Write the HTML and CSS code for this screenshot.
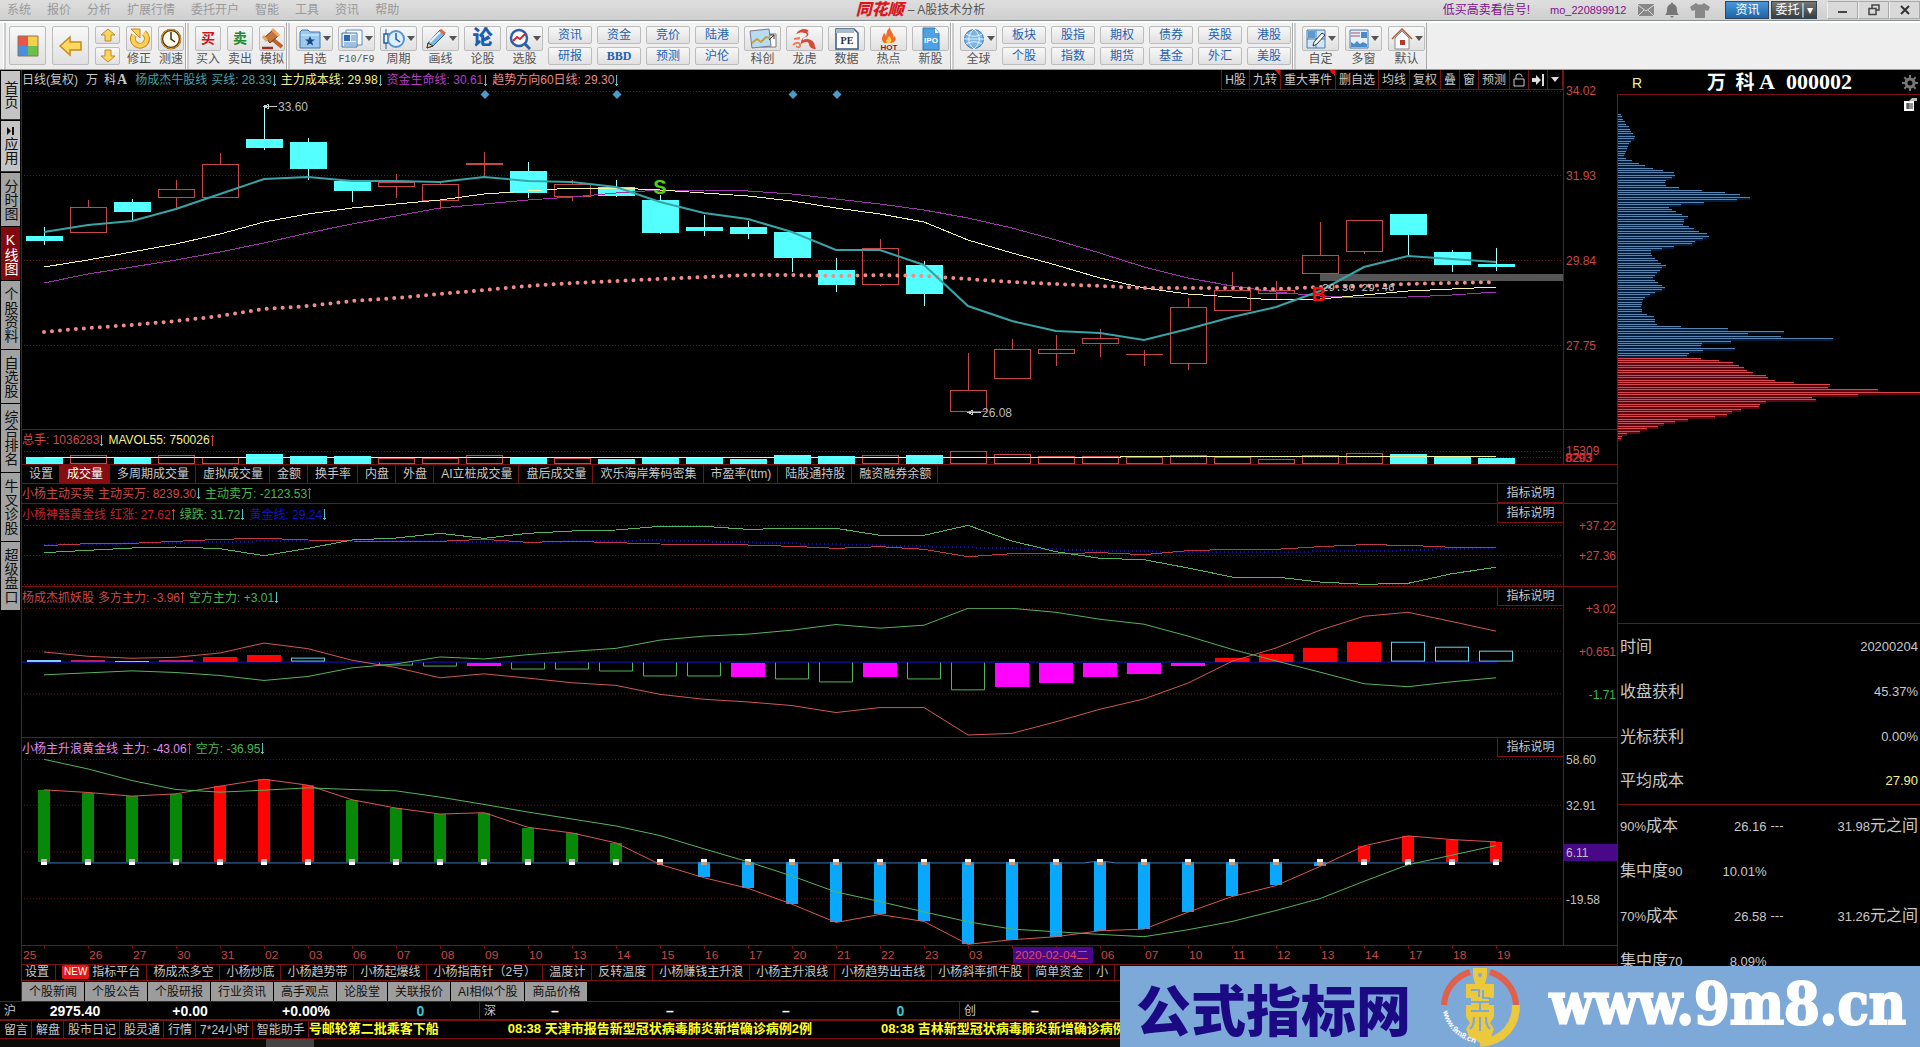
FILE: index.html
```html
<!DOCTYPE html>
<html lang="zh-CN">
<head>
<meta charset="utf-8">
<title>同花顺 - A股技术分析</title>
<link rel="stylesheet" href="styles.css">
</head>
<body>
<header class="titlebar">
  <nav class="menu">
    <a href="#">系统</a><a href="#">报价</a><a href="#">分析</a><a href="#">扩展行情</a><a href="#">委托开户</a><a href="#">智能</a><a href="#">工具</a><a href="#">资讯</a><a href="#">帮助</a>
  </nav>
  <div class="app-title"><span class="brand">同花顺</span><span>– A股技术分析</span></div>
  <div class="account">
    <a class="promo" href="#">低买高卖看信号!</a>
    <a class="promo user" href="#">mo_220899912</a>
    <svg width="16" height="12" viewBox="0 0 16 12"><rect width="16" height="12" fill="#888"/><path d="M0 1l8 6 8-6M0 12l6-6M16 12l-6-6" stroke="#ddd" fill="none"/></svg>
    <svg width="16" height="16" viewBox="0 0 16 16"><path d="M8 0l1.300 2C12 3 13 5 13 8c0 3 1 4 2 5H1c1-1 2-2 2-5 0-3 1-5 3.700-6zM6 14h4l-2 2z" fill="#777"/></svg>
    <svg width="20" height="16" viewBox="0 0 20 16"><path d="M6 1l2 1.500h4L14 1l6 4-2 4-3-1v8H5V8L2 9 0 5z" fill="#888"/></svg>
    <button class="news-btn">资讯</button>
    <button class="trade-btn">委托│▾</button>
    <div class="window-controls">
      <button aria-label="最小化"><svg width="12" height="12"><path d="M1 8h9" stroke="#444" stroke-width="2"/></svg></button>
      <button aria-label="还原"><svg width="12" height="12"><path d="M4 4V1h7v5H8M1 4.500h7v6H1z" fill="none" stroke="#444" stroke-width="1.500"/></svg></button>
      <button aria-label="关闭"><svg width="12" height="12"><path d="M2 2l8 8M10 2l-8 8" stroke="#333" stroke-width="2"/></svg></button>
    </div>
  </div>
</header>

<div class="toolbar">
  <div class="group">
    <button class="big" aria-label="主页"><svg width="22" height="22" viewBox="0 0 22 22"><path d="M1 1h10v10H1z" fill="#ee5548"/><path d="M11 1h10v10H11z" fill="#f6d04c"/><path d="M1 11h10v10H1z" fill="#4a90e0"/><path d="M11 11h10v10H11z" fill="#6dc04a"/><path d="M1 1h20v20H1z" fill="none" stroke="#887755"/></svg></button>
    <button class="big" aria-label="返回"><svg width="24" height="22" viewBox="0 0 24 22"><path d="M1 11L11 2v5h11v8H11v5z" fill="#ffd95c" stroke="#c48a20" stroke-width="1.500"/></svg></button>
    <div class="pair narrow">
      <button aria-label="上翻"><svg width="16" height="14" viewBox="0 0 16 14"><path d="M8 1l7 6h-4v6H5V7H1z" fill="#ffd45a" stroke="#b98a30"/></svg></button>
      <button aria-label="下翻"><svg width="16" height="14" viewBox="0 0 16 14"><path d="M8 13l7-6h-4V1H5v6H1z" fill="#ffd45a" stroke="#b98a30"/></svg></button>
    </div>
    <button class="tool"><i><svg width="22" height="22" viewBox="0 0 22 22"><path d="M6 7a7 7 0 1 0 10-2" fill="none" stroke="#c88a1c" stroke-width="6"/><path d="M6 7a7 7 0 1 0 10-2" fill="none" stroke="#ffd257" stroke-width="4"/><path d="M3 1h9v9z" fill="#ffd257" stroke="#c88a1c"/></svg></i>修正</button>
    <button class="tool"><i><svg width="22" height="22" viewBox="0 0 22 22"><circle cx="11" cy="11" r="9" fill="#fffbe8" stroke="#5b3a12" stroke-width="2.500"/><circle cx="11" cy="11" r="9.500" fill="none" stroke="#e9a52c"/><path d="M11 4v7l4 3" fill="none" stroke="#333" stroke-width="1.500"/></svg></i>测速</button>
  </div>
  <div class="group">
    <button class="tool"><i class="word buy">买</i>买入</button>
    <button class="tool"><i class="word sell">卖</i>卖出</button>
    <button class="tool"><i><svg width="22" height="22" viewBox="0 0 22 22"><path d="M10 10l11 9" stroke="#b8642c" stroke-width="4"/><path d="M4 9l8-7 5 6-8 7z" fill="#c4763c" stroke="#713712"/><path d="M2 8l4 5M11 1l7 7" stroke="#e9a868" stroke-width="3"/><path d="M1 20h11" stroke="#9c2d1c" stroke-width="2.500"/></svg></i>模拟</button>
  </div>
  <div class="group tight">
    <button class="tool drop"><i><svg width="22" height="20" viewBox="0 0 22 20"><path d="M1 3l2-2h6l2 2h10v16H1z" fill="#9bc9ef" stroke="#3e78ab"/><path d="M2 6h18" stroke="#e1f2ff"/><path d="M11 7l1.500 3.500H16l-3 2.300 1.200 3.700L11 14.500 7.800 16.500 9 12.800 6 10.500h3.500z" fill="#174a86"/></svg><b></b></i>自选</button>
    <button class="tool drop"><i><svg width="22" height="20" viewBox="0 0 22 20"><path d="M5 1h16v15H5z" fill="#fff" stroke="#5b8ac0"/><path d="M1 4h15v14H1z" fill="#e8f3ff" stroke="#3e78ab"/><path d="M3 6h6v6H3z" fill="#2c68b8"/><path d="M10 7h5M10 9h5M10 11h5M3 14h12M3 16h12" stroke="#5b8ac0"/></svg><b></b></i><span class="mono">F10/F9</span></button>
    <button class="tool drop"><i><svg width="22" height="22" viewBox="0 0 22 22"><path d="M3 1v20" stroke="#1e5ea8"/><path d="M1 6h4v9H1z" fill="#fff" stroke="#1e5ea8" stroke-width="1.500"/><circle cx="13" cy="11" r="8" fill="#dceeff" stroke="#5996d0" stroke-width="2"/><path d="M13 5v6l4 3" fill="none" stroke="#1e5ea8" stroke-width="1.500"/></svg><b></b></i>周期</button>
    <button class="tool drop"><i><svg width="22" height="22" viewBox="0 0 22 22"><path d="M3 15L15 2l5 4L8 18l-6 2z" fill="#7db9e2" stroke="#2f5d86"/><path d="M5 14L16 3" stroke="#e6f6ff" stroke-width="2"/><path d="M3 15l5 3-6 2z" fill="#eed0a0" stroke="#333"/><path d="M15 2l5 4" stroke="#d66c50" stroke-width="3"/></svg><b></b></i>画线</button>
    <button class="tool drop"><i class="word forum">论</i>论股</button>
    <button class="tool drop"><i><svg width="22" height="22" viewBox="0 0 22 22"><circle cx="10" cy="10" r="8" fill="#fff" stroke="#2c5fa8" stroke-width="2.500"/><path d="M16 16l5 5" stroke="#2c5fa8" stroke-width="3"/><path d="M4 13l4-4 3 2 5-5" fill="none" stroke="#d8282c" stroke-width="2"/></svg><b></b></i>选股</button>
    <div class="pair"><button>资讯</button><button>研报</button></div>
    <div class="pair"><button>资金</button><button class="bbd">BBD</button></div>
    <div class="pair"><button>竞价</button><button>预测</button></div>
    <div class="pair"><button>陆港</button><button>沪伦</button></div>
    <button class="tool drop"><i><svg width="28" height="22" viewBox="0 0 28 22"><path d="M12 6h15v13H12z" fill="#fff" stroke="#777"/><path d="M1 3l19-2 2 17-19 2z" fill="#b9dcf5" stroke="#778"/><path d="M3 15l5-4 4 3 5-5 4 1" fill="none" stroke="#c7a13b" stroke-width="2"/><path d="M20 12l5-5m-4 0h4v4" stroke="#333" fill="none"/></svg></i>科创</button>
    <button class="tool drop"><i><svg width="26" height="24" viewBox="0 0 26 24"><path d="M4 7c3-5 8-6 12-4 1 1 0 2-1 2 2 1 2 4-1 5-3 1-4 2-3 3 3-2 9-1 11 3 1 2 1 5 2 6-4 0-7-2-7-5-1-3-5-2-8 0 0-4 1-6 4-7 3-2 2-4-1-4-3-1-5 0-8 1z" fill="#d74a35"/><path d="M1 18c4-4 8-2 7 1-1 2-4 1-3 0M8 11l-6 1" stroke="#ee7a5e" stroke-width="2" fill="none"/></svg></i>龙虎</button>
    <button class="tool drop"><i><svg width="24" height="22" viewBox="0 0 24 22"><path d="M1 1h18l4 4v16H1z" fill="#fff" stroke="#38597c" stroke-width="1.500"/><path d="M1 1h18v4H1z" fill="#a9bac9"/><text x="12" y="16" text-anchor="middle" class="pe">PE</text></svg></i>数据</button>
    <button class="tool drop"><i><svg width="24" height="24" viewBox="0 0 24 24"><path d="M7 16c-4-4-1-7 0-10 2 1 2 3 2 4 1-4 0-6 4-10 0 5 5 7 3 11l2-2c2 4-1 7-4 7z" fill="#f26a28"/><path d="M10 16c-2-3 1-5 2-7 3 3 3 5 1 7z" fill="#ffd34d"/><text x="12" y="23" text-anchor="middle" class="hot">HOT</text></svg></i>热点</button>
    <button class="tool drop"><i><svg width="18" height="24" viewBox="0 0 18 24"><path d="M1 1h12l4 5v17H1z" fill="#4ea2e4" stroke="#2c78b8"/><path d="M13 1v5h4z" fill="#fff"/><text x="9" y="16" text-anchor="middle" class="ipo">IPO</text></svg></i>新股</button>
  </div>
  <div class="group tight">
    <button class="tool drop"><i><svg width="22" height="22" viewBox="0 0 22 22"><circle cx="11" cy="11" r="9.500" fill="#7db5e2" stroke="#3d77b3"/><path d="M11 1c-7 6-7 14 0 20 7-6 7-14 0-20M1 11h20M3 6c5 3 11 3 16 0M3 16c5-3 11-3 16 0" fill="none" stroke="#e4f4ff"/></svg><b></b></i>全球</button>
    <div class="pair"><button>板块</button><button>个股</button></div>
    <div class="pair"><button>股指</button><button>指数</button></div>
    <div class="pair"><button>期权</button><button>期货</button></div>
    <div class="pair"><button>债券</button><button>基金</button></div>
    <div class="pair"><button>英股</button><button>外汇</button></div>
    <div class="pair"><button>港股</button><button>美股</button></div>
  </div>
  <div class="group">
    <button class="tool drop"><i><svg width="20" height="20" viewBox="0 0 20 20"><path d="M1 1h18v18H1z" fill="#cfe6f8" stroke="#4a7baa"/><path d="M1 10h9V1M10 19v-9h9" fill="none" stroke="#4a7baa"/><path d="M2 2h7v7H2z" fill="#5b9bd2"/><path d="M7 17l1-4 8-9 3 2-8 9z" fill="#fff" stroke="#333"/></svg><b></b></i>自定</button>
    <button class="tool drop"><i><svg width="20" height="20" viewBox="0 0 20 20"><path d="M1 1h18v18H1z" fill="#e4f1fb" stroke="#4a7baa"/><path d="M2 4h9M2 7h9" stroke="#b04a6c"/><path d="M12 3h6v6h-6z" fill="#4a8cc8"/><path d="M2 18v-5l3 2 3-3 3 3 3-2 4 2v3z" fill="#4a8cc8"/></svg><b></b></i>多窗</button>
    <button class="tool drop"><i><svg width="22" height="22" viewBox="0 0 22 22"><path d="M4 10v11h14V10l-7-7z" fill="#fff" stroke="#888"/><path d="M1 11L11 1l10 10" fill="none" stroke="#b05a3c" stroke-width="1.500"/><path d="M9 12h5v5H9z" fill="#b23a26"/></svg><b></b></i>默认</button>
  </div>
</div>

<main class="workspace">
  <nav class="sidebar">
    <a class="light" href="#">首页</a>
    <a class="light short flag" href="#"><svg width="8" height="8" viewBox="0 0 8 8"><path d="M0 0l4 4-4 4zM5 0h2v8H5z" fill="#111"/></svg>应用</a>
    <a class="three" href="#">分时图</a>
    <a class="three current" href="#">K线图</a>
    <a href="#">个股资料</a>
    <a class="three" href="#">自选股</a>
    <a href="#">综合排名</a>
    <a href="#">牛叉诊股</a>
    <a href="#">超级盘口</a>
  </nav>

  <section class="charts">
    <div class="panel">
      <div class="legend">
        <span class="gray">日线(复权)</span><span class="gray name">万&ensp;科<b>A</b></span><span class="teal">杨成杰牛股线</span>
        <span class="teal">买线: 28.33<em class="down"></em></span><span class="yellow">主力成本线: 29.98<em class="down"></em></span><span class="magenta">资金生命线: 30.61<em class="down"></em></span><span class="pink">趋势方向60日线: 29.30<em class="down"></em></span>
        <div class="chart-tools">
          <button>H股</button><button class="flag">九转</button><button class="flag">重大事件</button><button>删自选</button><button>均线</button><button>复权</button><button>叠</button><button>窗</button><button>预测</button>
          <button aria-label="锁定"><svg width="12" height="14" viewBox="0 0 12 14"><path d="M1 6h10v7H1zM3 6V3q0-2 3-2t3 2v1" fill="none" stroke="#ccc"/></svg></button>
          <button aria-label="最新"><svg width="12" height="12" viewBox="0 0 12 12"><path d="M0 4h4V1l5 5-5 5V8H0zM10 0h2v12h-2z" fill="#ddd"/></svg></button>
          <button aria-label="更多"><svg width="8" height="5" viewBox="0 0 8 5"><path d="M0 0h8L4 5z" fill="#ddd"/></svg></button>
        </div>
      </div>
      <div class="axis"></div>
      <svg class="plot h-main" id="main" viewBox="22 90 1541 339" preserveAspectRatio="none"></svg>
      <svg class="axis h-main" id="main-axis" width="54"></svg>
    </div>
    <div class="panel">
      <div class="legend"><span class="red">总手: 1036283<em class="down"></em></span><span class="yellow">MAVOL55: 750026<em class="up"></em></span></div>
      <div class="axis"></div>
      <svg class="plot h-vol" id="vol" viewBox="22 450 1541 14" preserveAspectRatio="none"></svg>
      <svg class="axis h-vol" id="vol-axis" width="54"></svg>
    </div>
    <nav class="tabs"><button>设置</button><button class="on">成交量</button><button>多周期成交量</button><button>虚拟成交量</button><button>金额</button><button>换手率</button><button>内盘</button><button>外盘</button><button>AI立桩成交量</button><button>盘后成交量</button><button>欢乐海岸筹码密集</button><button>市盈率(ttm)</button><button>陆股通持股</button><button>融资融券余额</button></nav>
    <div class="panel">
      <div class="legend"><span class="red">小杨主动买卖</span><span class="red">主动买万: 8239.30<em class="down"></em></span><span class="green">主动卖万: -2123.53<em class="up"></em></span><button class="explain">指标说明</button></div>
      <div class="axis"></div>
    </div>
    <div class="panel">
      <div class="legend"><span class="scarlet">小杨神器黄金线</span><span class="scarlet">红涨: 27.62<em class="up"></em></span><span class="green">绿跌: 31.72<em class="down"></em></span><span class="blue">黄金线: 29.24<em class="down"></em></span><button class="explain">指标说明</button></div>
      <div class="axis"></div>
      <svg class="plot h-gold" id="gold" viewBox="22 525 1541 61" preserveAspectRatio="none"></svg>
      <svg class="axis h-gold" id="gold-axis" width="54"></svg>
    </div>
    <div class="panel">
      <div class="legend"><span class="red">杨成杰抓妖股</span><span class="red">多方主力: -3.96<em class="up"></em></span><span class="green">空方主力: +3.01<em class="down"></em></span><button class="explain">指标说明</button></div>
      <div class="axis"></div>
      <svg class="plot h-force" id="force" viewBox="22 607 1541 130" preserveAspectRatio="none"></svg>
      <svg class="axis h-force" id="force-axis" width="54"></svg>
    </div>
    <div class="panel">
      <div class="legend"><span class="violet">小杨主升浪黄金线</span><span class="violet">主力: -43.06<em class="up"></em></span><span class="green">空方: -36.95<em class="down"></em></span><button class="explain">指标说明</button></div>
      <div class="axis"></div>
      <svg class="plot h-wave" id="wave" viewBox="22 758 1541 187" preserveAspectRatio="none"></svg>
      <svg class="axis h-wave" id="wave-axis" width="54"></svg>
    </div>
    <svg class="dates" id="dates" viewBox="22 945 1595 18" preserveAspectRatio="none"></svg>
    <nav class="tabs indicators"><button>设置</button><button><mark>NEW</mark>指标平台</button><button>杨成杰多空</button><button>小杨炒底</button><button>小杨趋势带</button><button>小杨起爆线</button><button>小杨指南针（2号）</button><button>温度计</button><button>反转温度</button><button>小杨赚钱主升浪</button><button>小杨主升浪线</button><button>小杨趋势出击线</button><button>小杨斜率抓牛股</button><button>简单资金</button><button>小</button></nav>
    <nav class="news-tabs"><button>个股新闻</button><button>个股公告</button><button>个股研报</button><button>行业资讯</button><button>高手观点</button><button>论股堂</button><button>关联报价</button><button>AI相似个股</button><button>商品价格</button></nav>
  </section>

  <aside class="side-panel">
    <div class="stock-head">
      <span class="mark-r">R</span>
      <h1><span>万&ensp;科</span>&thinsp;A&ensp;000002</h1>
      <button class="gear" aria-label="设置"><svg width="16" height="16" viewBox="0 0 16 16"><circle cx="8" cy="8" r="4" fill="none" stroke="#777" stroke-width="3"/><path d="M8 0v3M8 13v3M0 8h3M13 8h3M2.300 2.300l2 2M11.700 11.700l2 2M2.300 13.700l2-2M11.700 4.300l2-2" stroke="#777" stroke-width="2"/></svg></button>
    </div>
    <div class="cost">
      <svg class="cost-plot" id="cost" viewBox="0 0 303 528" preserveAspectRatio="none"></svg>
      <svg class="cost-tool" width="14" height="13" viewBox="0 0 14 13"><path d="M0 3h10v10H0z" fill="#fff"/><path d="M2 6h7M2 8h7M2 10h7M4 5v6" stroke="#222"/><path d="M4 4l4-4h5v3H8z" fill="#bbb"/></svg>
    </div>
    <table class="stats">
      <tbody>
        <tr><th>时间</th><td></td><td>20200204</td></tr>
        <tr><th>收盘获利</th><td></td><td>45.37%</td></tr>
        <tr><th>光标获利</th><td></td><td>0.00%</td></tr>
        <tr><th>平均成本</th><td></td><td class="yellow">27.90</td></tr>
      </tbody>
      <tbody>
        <tr><th><span>90%</span>成本</th><td>26.16</td><td><u>---</u>31.98<span>元之间</span></td></tr>
        <tr><th>集中度<span>90</span></th><td>10.01%</td><td></td></tr>
        <tr><th><span>70%</span>成本</th><td>26.58</td><td><u>---</u>31.26<span>元之间</span></td></tr>
        <tr><th>集中度<span>70</span></th><td>8.09%</td><td></td></tr>
      </tbody>
    </table>
  </aside>
</main>

<section class="indices">
  <div class="index"><span>沪</span><b>2975.40</b><b>+0.00</b><b>+0.00%</b><b class="cyan">0</b></div>
  <div class="index"><span>深</span><b>–</b><b>–</b><b>–</b><b class="cyan">0</b></div>
  <div class="index"><span>创</span><b>–</b></div>
  <div class="index"></div>
</section>
<footer class="ticker">
  <nav><button>留言</button><button>解盘</button><button>股市日记</button><button>股灵通</button><button>行情</button><button>7*24小时</button><button>智能助手</button></nav>
  <p><span>号邮轮第二批乘客下船</span><span>08:38 天津市报告新型冠状病毒肺炎新增确诊病例2例</span><span>08:38 吉林新型冠状病毒肺炎新增确诊病例</span></p>
</footer>
<div class="scroll-strip"><i></i></div>

<div class="banner">
  <strong>公式指标网</strong>
  <svg width="80" height="80" viewBox="0 0 80 80">
    <path d="M4 38A36 36 0 0 1 30 5M50 5a36 36 0 0 1 26 33" fill="none" stroke="#e0604a" stroke-width="6"/>
    <path d="M76 38c0 20-12 36-36 38" fill="none" stroke="#ecc83c" stroke-width="8"/>
    <path d="M33 1h14v8l-2 8h9v14h-5v7h5v12l-4 6 4 6-3 8-7 3-4 3-4-3-7-3-3-8 4-6-4-6V38h5v-7h-5V17h9l-2-8z" fill="#ecc83c"/>
    <circle cx="40" cy="8" r="2" fill="#7da9d9"/>
    <path d="M31 23h8v7M43 23v8h7M31 35h18M31 44h18M40 35v9M34 50c0 8-2 10-4 12M40 50v14M46 50c0 8 2 10 4 12" fill="none" stroke="#7da9d9" stroke-width="2"/>
    <path id="seal" d="M3 44c3 16 13 26 31 32" fill="none"/>
    <text class="seal-text"><textPath href="#seal">www.9m8.cn</textPath></text>
  </svg>
  <span>www.9m8.cn</span>
</div>
<script src="charts.js"></script>
</body>
</html>
```
FILE: styles.css
```css
* { box-sizing: border-box; }
body {
  margin: 0;
  background: #000;
  color: #c8c8c8;
  font: 12px/16px "Liberation Sans", "Noto Sans CJK SC", sans-serif;
  overflow: hidden;
  position: relative;
  min-height: 100vh;
}
button { font: inherit; color: inherit; background: none; border: 0; padding: 0; margin: 0; white-space: nowrap; }
a { color: inherit; text-decoration: none; }
svg { display: block; }

/* title bar */
.titlebar {
  display: grid; grid-template-columns: 19fr auto 21fr; align-items: center;
  height: 21px; background: linear-gradient(#dedede, #cfcfcf); border-bottom: 1px solid #8a8f8f; color: #999;
}
.menu { display: flex; gap: 16px; padding-left: 7px; }
.app-title { display: flex; align-items: center; gap: 4px; color: #555; padding-left: 10px; }
.brand { color: #d81820; font-weight: 900; font-size: 16px; font-style: italic; }
.account { display: flex; justify-content: flex-end; align-items: center; gap: 10px; }
.promo { color: #80108c; margin-right: 10px; }
.promo.user { font-size: 11px; margin-right: 2px; }
.news-btn, .trade-btn { height: 18px; padding: 0 9px; color: #fff; background: linear-gradient(#4a98d8, #1d63a8); border: 1px solid #345; margin-left: 5px; }
.trade-btn { background: linear-gradient(#777, #3c3c3c); padding: 0 3px; margin-left: -8px; }
.window-controls { display: flex; }
.window-controls button { width: 31px; height: 18px; border: 1px solid #aaa; border-left-color: #eee; display: grid; place-items: center; background: #d9d9d9; }

/* toolbar */
.toolbar { display: flex; height: 49px; background: #efefef; border-top: 2px solid #fff; border-bottom: 1px solid #999; padding-left: 3px; color: #555; }
.group { display: flex; gap: 6px; padding: 3px 1px 0 5px; border-left: 1px solid #fff; border-right: 1px solid #aaa; background: linear-gradient(#f4f4f4, #ebebeb); box-shadow: inset 2px 0 0 #ccc; }
.group.tight { gap: 5px; }
.group + .group { padding-left: 8px; }
.big, .tool i, .pair button { border: 1px solid #bcbcbc; border-radius: 2px; background: linear-gradient(#f8f8f8, #e0e0e0); }
.big { width: 37px; height: 39px; display: grid; place-items: center; }
.pair { width: 44px; display: flex; flex-direction: column; gap: 3px; color: #1d62b0; }
.pair.narrow { width: 25px; }
.pair button { height: 18px; line-height: 14px; display: grid; place-items: center; }
.bbd { font-weight: bold; font-family: "Liberation Serif", serif; }
.mono { font-family: "Liberation Mono", monospace; font-size: 10px; }
.tool { width: 26px; line-height: 17px; display: flex; flex-direction: column; align-items: center; }
.tool.drop { width: 37px; }
.tool i { width: 100%; height: 25px; display: flex; align-items: center; justify-content: center; gap: 2px; font-style: normal; }
.tool b { border: 4px solid transparent; border-top: 5px solid #555; border-bottom: 0; }
.word { font-size: 14px; font-weight: bold; }
.word.buy { color: #c8141c; }
.word.sell { color: #1b8a2c; }
.word.forum { color: #1c5bb0; font-size: 20px; font-weight: 900; }
.pe { font: bold 10px "Liberation Serif", serif; fill: #234; }
.hot { font: bold 8px "Liberation Sans", sans-serif; fill: #a3131a; }
.ipo { font: bold 8px "Liberation Sans", sans-serif; fill: #fff; }

/* workspace */
.workspace { display: flex; height: 931px; }
.sidebar { width: 21px; flex: none; display: flex; flex-direction: column; gap: 1px; padding: 1px 1px 0 1px; font-size: 14px; }
.sidebar a { height: 68px; display: flex; flex-direction: column; align-items: center; justify-content: center; writing-mode: vertical-rl; text-orientation: upright; background: #a3a3a3; color: #111; }
.sidebar .three { height: 53px; }
.sidebar .light { height: 49px; background: #c4c4c4; border-bottom: 1px solid #8a1010; }
.sidebar .light.short { height: 51px; flex-direction: row; gap: 2px; }
.sidebar .current { background: #800a0e; color: #fff; }
.flag { background-image: linear-gradient(45deg, transparent 50%, #e01010 50%); background-size: 6px 6px; background-position: top right; background-repeat: no-repeat; }
.sidebar .flag { background-color: #c4c4c4; }

.charts { flex: 1; min-width: 0; border-left: 1px solid #7a1010; display: flex; flex-direction: column; }
.panel { display: grid; grid-template-columns: minmax(0, 1fr) 54px; border-bottom: 1px solid #7a1010; }
.legend { height: 21px; display: flex; align-items: center; gap: 4px; white-space: nowrap; }
.legend span { display: flex; align-items: center; white-space: pre; }
.legend .name { padding: 0 4px; }
.name b { font: bold 14px "Liberation Serif", serif; padding-left: 1px; }
.legend em { width: 5px; height: 11px; background: linear-gradient(#5ac0c8, #5ac0c8) 2px 0 / 1px 11px no-repeat, linear-gradient(#5ac0c8, #5ac0c8) 1px 9px / 3px 1px no-repeat; }
.legend em.up { background: linear-gradient(#d84040, #d84040) 2px 0 / 1px 11px no-repeat, linear-gradient(#d84040, #d84040) 1px 1px / 3px 1px no-repeat; }
.panel:first-child .legend, .panel:nth-child(2) .legend { height: 20px; }
.panel:nth-child(4) .legend { height: 19px; }
.plot { width: 100%; shape-rendering: crispEdges; }
.smooth { shape-rendering: auto; }
.axis { border-left: 1px solid #7a1010; overflow: visible; }
.h-main { height: 339px; }
.h-vol { height: 14px; }
.h-gold { height: 61px; }
.h-force { height: 129px; }
.h-wave { height: 186px; }
.dates { width: 100%; height: 18px; }
.chart-tools { margin-left: auto; display: flex; align-self: stretch; border: 1px solid #7a1010; border-top: 0; }
.chart-tools button { padding: 0 3px; border-left: 1px solid #7a1010; display: grid; place-items: center; }
.chart-tools button:first-child { border-left: 0; }
.explain { margin-left: auto; align-self: flex-start; width: 66px; height: 19px; border: 1px solid #7a1010; border-top: 0; border-right: 0; }

.gray { color: #c8c8c8; } .teal { color: #45a3a8; } .yellow { color: #f2f28c; } .magenta { color: #b93cc4; }
.pink { color: #e88a8c; } .red { color: #cf4848; } .scarlet { color: #c8202c; } .green { color: #46b84e; }
.blue { color: #1414c8; } .violet { color: #e48ae8; } .cyan { color: #38c8dc; }

.tabs { height: 20px; display: flex; border-bottom: 1px solid #7a1010; overflow: hidden; }
.tabs button { padding: 0 6px 0 7px; border-right: 1px solid #7a1010; flex: none; display: flex; align-items: center; gap: 3px; }
.tabs .on { background: #870e10; color: #fff; }
.indicators { height: 18px; border-top: 1px solid #7a1010; border-bottom: 1px solid #7a1010; padding-right: 54px; }
.indicators button { padding: 0 6px; }
.indicators button:first-child { padding-left: 3px; }
mark { background: #e01818; color: #fff; border-radius: 2px; padding: 0 2px; font-size: 10px; line-height: 14px; }
.news-tabs { display: flex; gap: 1px; margin-top: 1px; }
.news-tabs button { height: 19px; padding: 0 7px; background: #9c9c9c; color: #111; }

.side-panel { width: 303px; flex: none; }
.stock-head { height: 24px; display: grid; grid-template-columns: 40px 1fr 18px; align-items: center; }
.mark-r { padding-left: 15px; color: #f2f2a0; font-size: 14px; }
h1 { margin: 0; font: bold 22px/24px "Liberation Serif", "Noto Sans CJK SC", serif; color: #fff; text-align: center; }
h1 span { font-size: 19px; }
.cost { position: relative; height: 530px; border: solid #7a1010; border-width: 1px 0 1px 1px; }
.cost-plot { width: 100%; height: 528px; shape-rendering: crispEdges; }
.cost-tool { position: absolute; right: 2px; top: 3px; }
.stats { width: 100%; border-collapse: collapse; font-size: 13px; border-left: 1px solid #7a1010; table-layout: fixed; }
.stats tbody + tbody { border-top: 1px solid #7a1010; }
.stats tr { height: 45px; }
.stats th { font-weight: normal; font-size: 16px; text-align: left; padding: 0 0 0 2px; width: 90px; }
.stats th span { font-size: 13px; }
.stats td { text-align: right; padding: 0 2px 0 0; white-space: nowrap; }
.stats td:nth-child(2) { width: 61px; }
.stats td span { font-size: 16px; }
.stats u { text-decoration: none; float: left; padding-left: 2px; }

/* bottom rows */
.indices { display: grid; grid-template-columns: 480px 480px 480px 1fr; height: 20px; border-top: 1px solid #7a1010; border-bottom: 2px solid #7a1010; }
.index { display: grid; grid-template-columns: 20px 110px 120px 112px 117px; align-items: center; text-align: center; border-right: 1px solid #7a1010; }
.index b { font-size: 14px; color: #fff; }
.index b.cyan { color: #38c8dc; }
.ticker { display: flex; height: 18px; border-bottom: 1px solid #7a1010; }
.ticker nav { display: flex; flex: none; }
.ticker button { padding: 0 3px 0 4px; border-right: 1px solid #7a1010; }
.ticker p { margin: 0; flex: 1; display: flex; gap: 69px; overflow: hidden; white-space: nowrap; color: #ffff28; font-weight: bold; font-size: 13px; }
.scroll-strip { height: 8px; background: #0c0c08; padding-left: 266px; }
.scroll-strip i { display: block; width: 48px; height: 8px; background: #444; }

/* site banner lying over the lower right corner */
.banner { position: absolute; right: 0; bottom: 0; width: 800px; height: 81px; background: #7da9d9; display: flex; align-items: center; justify-content: space-between; padding: 0 14px 0 16px; }
.banner strong { color: #1c0a84; font: 900 55px/80px "Noto Sans CJK SC", sans-serif; }
.banner span { color: #fff; font: bold 57px/76px "DejaVu Serif Condensed", "DejaVu Serif", serif; -webkit-text-stroke: 2px #fff; align-self: flex-start; }
.seal-text { font: bold 8px "Liberation Sans", sans-serif; fill: #fff; }

/* chart drawing */
.grid { stroke: #6a1414; stroke-dasharray: 1 2; fill: none; }
.label { font: 12px "Liberation Sans", "Noto Sans CJK SC", sans-serif; }
.signal { font: bold 20px "Liberation Sans", sans-serif; }
.range { font: 11px "Liberation Mono", monospace; }
```
FILE: charts.js
```js
const STEP = 44;
const FIRST = 44;
const CYAN = '#54ffff';
const RED = '#c84848';
const x = i => FIRST + STEP * i;
const el = id => document.getElementById(id);
const rect = (a, b, w, h, fill, stroke = 'none') =>
  `<rect x="${a}" y="${b}" width="${w}" height="${h}" fill="${fill}" stroke="${stroke}"/>`;
const path = (d, color, extra = '') => `<path d="${d}" fill="none" stroke="${color}" ${extra}/>`;
const line = (ys, color, extra = '') =>
  path('M' + ys.map((y, i) => `${x(i)} ${y}`).join('L'), color, extra);
const grid = ys => ys.map(y => `<path class="grid" d="M24 ${y}H1562"/>`).join('');
const text = (a, b, s, fill, cls = 'label', anchor = 'start') =>
  `<text x="${a}" y="${b}" fill="${fill}" class="${cls}" text-anchor="${anchor}">${s}</text>`;

// candles: [filled, body top, body bottom, high, low]
const candles = [
  [1,236,241,227,245],[0,207,232,200,232],[1,202,212,199,220],[0,189,197,180,209],[0,164,197,153,197],
  [1,139,148,105,150],[1,142,169,138,180],[1,181,191,180,202],[0,182,186,174,198],[0,184,200,181,209],
  [0,163,164,152,176],[1,171,193,162,198],[0,184,196,180,201],[1,187,196,180,197],[1,200,233,195,234],
  [1,227,231,215,236],[1,227,234,221,239],[1,232,258,232,272],[1,270,285,258,292],[0,248,284,239,286],
  [1,265,294,261,306],[0,390,411,353,411],[0,349,378,339,378],[0,349,353,335,366],[0,338,343,329,357],
  [0,354,354,350,366],[0,307,363,298,370],[0,290,310,272,310],[0,290,293,281,299],[0,255,273,222,273],
  [0,220,251,220,254],[1,214,235,214,256],[1,252,265,250,272],[1,264,267,248,271]];
const buyLine = [232,225,221,209,194,179,177,181,181,182,177,181,182,187,202,213,219,232,250,250,265,306,321,331,333,340,329,317,307,291,267,256,259,262];
const costLine = [267,260,252,244,234,222,214,208,204,200,194,191,188,188,190,193,196,201,208,214,222,240,253,265,278,288,294,297,300,299,295,291,289,287];
const lifeLine = [283,274,267,260,252,243,233,224,216,208,204,200,197,193,190,190,191,194,199,204,210,218,228,240,253,267,278,286,292,296,298,297,295,292];
const trend = [332,328,325,321,316,309,306,301,298,294,290,286,283,281,279,277,275,275,276,275,276,279,282,284,286,288,288,288,289,287,286,284,283,282];

let s = grid([91, 175, 260, 345].map(v => v + .5));
for (const d of [485, 617, 793, 837]) s += `<path class="smooth" d="M${d} 90l4.500 4.500-4.500 4.500-4.500-4.500z" fill="#4a9cc8"/>`;
s += rect(1320, 274, 243, 7, '#565656');
candles.forEach(([filled, top, bottom, high, low], i) => {
  const c = x(i) + .5;
  if (filled) {
    s += path(`M${c} ${high}V${low}`, '#a8ffff') + rect(x(i) - 18, top, 37, bottom - top, CYAN);
  } else {
    s += path(`M${c} ${high}V${top}M${c} ${bottom}V${low}`, RED);
    s += bottom > top
      ? rect(x(i) - 17.5, top + .5, 36, bottom - top, 'none', RED)
      : path(`M${x(i) - 18} ${top + .5}h37`, RED);
  }
});
s += line(lifeLine, '#a034ac') + line(costLine, '#f4f4a8');
s += line(trend, '#f08c8c', 'class="smooth" stroke-width="4" stroke-linecap="round" stroke-dasharray="0 8"');
s += line(buyLine, '#38a4a8', 'class="smooth" stroke-width="2"');
s += path('M264 106.500H277M264 106.500l4-2v4z', '#ccc') + text(278, 111, '33.60', '#bbb');
s += path('M968 412.500H981M968 412.500l4-2v4z', '#ccc') + text(982, 417, '26.08', '#bbb');
s += text(1322, 291, '29.30 29.46', '#ccc', 'range');
s += text(660, 194, 'S', '#52d01c', 'signal', 'middle') + text(1319, 301, 'B', '#f01010', 'signal', 'middle');
el('main').innerHTML = s;

el('main-axis').innerHTML = [['34.02', 5], ['31.93', 90], ['29.84', 175], ['27.75', 260]].map(([t, y]) => text(2, y, t, RED)).join('');

// volume: positive = rising (outline), negative = falling (filled)
const volume = [-7,8,-7,8,6,-10,-8,-8,5,5,8,-6,5,-5,-6,-6,-5,-9,-8,8,-9,12,9,7,7,6,8,6,4,8,10,-10,-7,-6];
s = grid([451.5, 457.5]);
volume.forEach((v, i) => {
  s += v < 0 ? rect(x(i) - 18, 464 + v, 37, -v, CYAN) : rect(x(i) - 17.5, 463.5 - v, 36, v, 'none', RED);
});
s += path('M44 457.500H1120V456.500H1496', '#f4f49a');
el('vol').innerHTML = s;
el('vol-axis').innerHTML = text(2, 5, '15309', RED) + text(1, 12, '8293', '#e03038') + text(2, 12, '8203', '#e03038');

// two-line indicator with its dotted mean
const up = [377,371,370,364,358,355,360,363,364,364,358,367,364,368,372,374,375,379,385,380,388,410,401,401,398,404,392,388,388,380,374,376,382,383];
const fall = [398,391,384,381,386,407,385,360,354,340,355,340,333,330,319,319,328,325,325,346,346,316,363,395,415,419,444,471,471,486,493,490,461,442];
const mean = [374,372,370,368,366,364,363,362,362,364,366,366,364,362,361,364,367,370,373,376,379,382,385,388,392,394,396,397,396,394,393,391,387,384];
const at420 = a => a.map(v => 420 + v / 3);
const at730 = a => a.map(v => 730 + v / 3);
el('gold').innerHTML = grid([525.5, 555.5, 584.5]) + line(at420(mean), '#1010a8', 'stroke-dasharray="1 3" stroke-width="2"') +
  line(at420(up), '#c03848') + line(at420(fall), '#56b45c');
el('gold-axis').innerHTML = text(52, 5, '+37.22', RED, 'label', 'end') + text(52, 35, '+27.36', RED, 'label', 'end');

// long and short force with histogram
const longs = [694,707,713,710,697,667,684,719,741,772,760,773,787,795,822,837,845,856,877,862,862,945,940,905,867,836,788,722,682,628,586,574,602,631];
const shorts = [763,757,751,756,765,780,768,742,730,709,715,702,692,683,658,646,640,628,611,622,613,562,562,574,595,610,646,686,721,755,790,799,784,772];
const bars = ['c2','k2','c1','k2','r5','r7','o4','','g4','g5','m4','g8','g8','g10','g15','g15','m16','g18','g21','m16','g18','g29','m26','m22','m16','m13','m4','r4','r8','r14','r20','o20','o15','o11'];
s = grid([607.5, 650.5, 693.5]) + path('M22 661.500H1497', '#1414c8');
bars.forEach((b, i) => {
  const h = +b.slice(1), a = x(i) - 17, z = 661;
  if (b[0] === 'c') s += rect(a, z - h, 34, h, '#7cd0ff');
  if (b[0] === 'k') s += rect(a, z - h, 34, h, '#c02060');
  if (b[0] === 'r') s += rect(a, z - h, 34, h, '#ff0404');
  if (b[0] === 'm') s += rect(a, z + 1, 34, h - 1, '#ff04ff');
  if (b[0] === 'o') s += rect(a + .5, z - h + .5, 33, h - 1, 'none', '#68d4ec');
  if (b[0] === 'g') s += path(`M${a + .5} 662v${h - 1.5}h33V662`, '#56b45c');
});
s += line(at420(longs), '#d05854') + line(at420(shorts), '#56b45c');
el('force').innerHTML = s;
el('force-axis').innerHTML = text(52, 5, '+3.02', RED, 'label', 'end') + text(52, 48, '+0.651', RED, 'label', 'end') + text(52, 91, '-1.71', '#38b848', 'label', 'end');

// main wave columns
const wave = [177,185,196,189,166,145,163,207,232,250,246,290,307,337,402,442,474,522,577,553,574,643,629,620,602,597,546,499,466,408,346,316,327,334];
const slow = [85,114,149,176,184,178,171,176,180,199,221,244,265,286,315,355,394,437,485,514,545,575,597,605,613,620,599,574,541,505,453,403,374,345];
s = grid([758.5, 804.5, 851.5, 898.5]);
wave.forEach((v, i) => {
  const y = Math.round(730 + v / 3);
  const color = i > 29 || (i > 3 && i < 7) ? '#ff0404' : '#088808';
  if (y < 862) s += rect(x(i) - 6, y, 12, 862 - y, color);
  else if (i !== 14) s += rect(x(i) - 6, 862, 12, y - 862, '#08a8ff');
});
s += path('M44 862.500H1084L1100 860.500L1116 862.500H1497', '#3c78b8');
wave.forEach((v, i) => {
  const above = v < 397;
  s += rect(x(i) - 3, above ? 859 : 862, 6, 3, above ? '#b8b0b8' : '#c89878');
  s += rect(x(i) - 3, above ? 862 : 859, 6, 3, '#fff');
});
s += line(at730(wave), '#d85854') + line(at730(slow), '#56b45c');
el('wave').innerHTML = s;
el('wave-axis').innerHTML = rect(0, 85, 54, 17, '#480888') + [['58.60', 5], ['32.91', 51], ['6.11', 98], ['-19.58', 145]].map(([t, y]) => text(2, y, t, '#c0c0c0')).join('');

// date scale
const days = ['25','26','27','30','31','02','03','06','07','08','09','10','13','14','15','16','17','20','21','22','23','03','','','06','07','10','11','12','13','14','17','18','19'];
s = days.map((d, i) => text(i ? x(i) + 1 : 23, 13 + 945, d, RED) + path(`M${x(i) + .5} 945v3`, '#7a1010')).join('');
s += rect(1013, 946, 80, 17, '#480888') + text(1015, 958, '2020-02-04二', '#e04868');
el('dates').innerHTML = s;

// cost distribution, one thin row per price level
const trapped = [3,4,5,7,8,11,12,13,15,17,16,13,11,10,9,8,7,6,8,14,21,27,35,45,56,57,54,48,47,48,61,84,107,122,132,119,86,63,51,54,58,64,70,66,66,65,71,76,81,89,91,85,77,74,56,44,33,33,34,37,40,43,48,44,42,39,37,35,37,40,44,47,44,37,32,27,25,24,24,23,24,24,29,36,37,37,39,63,110,167,130,164,216,113,84,83,117,85,71,69];
const profit = [83,101,115,121,126,129,135,148,150,158,177,213,211,261,303,241,195,199,148,142,141,123,114,109,97,70,57,46,40,29,22,9,4,3];
const rows = trapped.concat(profit);
s = '';
rows.forEach((w, k) => {
  const y = 19 + Math.round(k * 324 / (rows.length - 1));
  const blue = k < trapped.length;
  s += rect(0, y, w, 3, blue ? '#001c3c' : '#580810');
  s += rect(0, y, w, 1, blue ? '#5886b0' : '#d84850');
});
el('cost').innerHTML = s;
```
